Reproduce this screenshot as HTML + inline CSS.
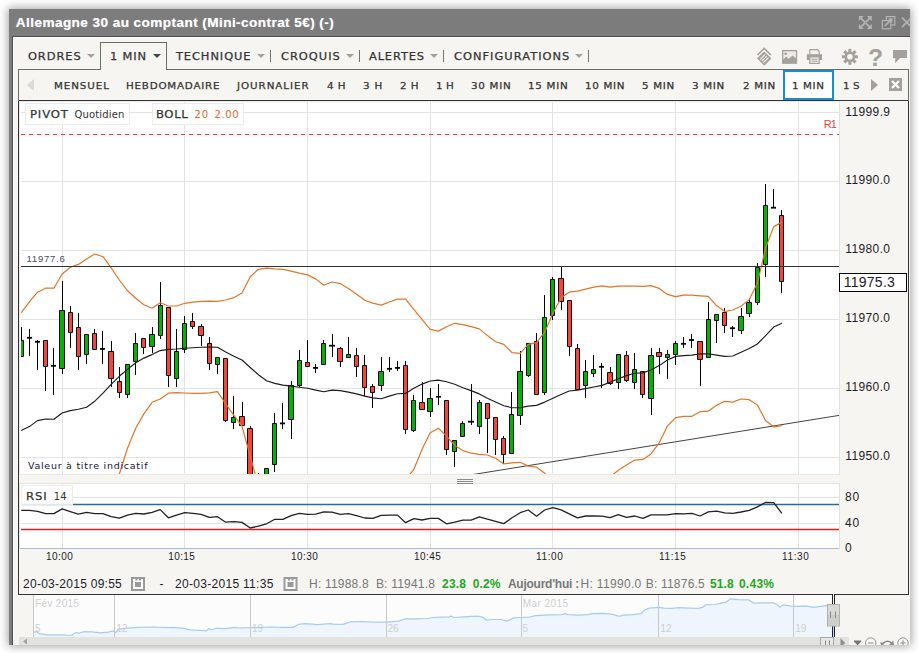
<!DOCTYPE html>
<html lang="fr"><head><meta charset="utf-8"><title>Allemagne 30 au comptant</title>
<style>
html,body{margin:0;padding:0;background:#fff;}
body{width:918px;height:653px;overflow:hidden;position:relative;font-family:"Liberation Sans",sans-serif;}
.abs{position:absolute;}
.t{position:absolute;white-space:nowrap;}
#win{position:absolute;left:9px;top:9px;width:901px;height:636px;background:#f6f5f1;box-shadow:0 0 9px 1px rgba(0,0,0,.38);}
</style></head>
<body>
<div id="win"></div>
<div class="abs" style="left:9px;top:9px;width:901px;height:27px;background:#7c7c7c;"></div>
<div class="abs" style="left:9px;top:9px;width:3px;height:636px;background:#7c7c7c;"></div>
<div class="abs" style="left:12px;top:36px;width:898px;height:1px;background:#4d4d4d;"></div>
<div class="abs" style="left:12px;top:36px;width:1px;height:609px;background:#4d4d4d;"></div>
<div class="abs" style="left:13px;top:37px;width:897px;height:1px;background:#fff;"></div>
<div class="abs" style="left:13px;top:37px;width:1px;height:608px;background:#fff;"></div>
<div class="t" style="left:15.8px;top:15.0px;font:bold 13.6px/15px 'Liberation Sans',sans-serif;color:#fff;letter-spacing:0.42px;text-shadow:0 0 1px rgba(255,255,255,.6);">Allemagne 30 au comptant (Mini-contrat 5€) (-)</div>
<svg class="abs" style="left:0;top:0" width="918" height="653" viewBox="0 0 918 653">
<defs><clipPath id="cm"><rect x="21" y="102" width="818" height="372"/></clipPath><clipPath id="cr"><rect x="20" y="483" width="819" height="65"/></clipPath></defs>
<rect x="19" y="101" width="820" height="374" fill="#e9e9e9"/>
<rect x="20" y="102" width="819" height="372" fill="#fff"/>
<rect x="19" y="483" width="820" height="66" fill="#e4e4e4"/>
<rect x="20" y="484" width="819" height="64" fill="#fff"/>
<path d="M62.5 102V474M62.5 484V548M184.5 102V474M184.5 484V548M307.5 102V474M307.5 484V548M430.5 102V474M430.5 484V548M552.5 102V474M552.5 484V548M675.5 102V474M675.5 484V548M798.5 102V474M798.5 484V548M21 112.5H839M21 181.5H839M21 250.5H839M21 319.5H839M21 388.5H839M21 457.5H839M21 497.5H839M21 523.5H839" stroke="#e3e3e3" stroke-width="1" fill="none"/>
<path d="M839.5 101V475M839.5 483V549" stroke="#e2e2e2" stroke-width="1"/>
<path d="M20 548.5H839" stroke="#a9bdd2" stroke-width="1"/>
<path d="M21 134.5H839" stroke="#f03a3a" stroke-width="1" stroke-dasharray="4 4"/>
<g clip-path="url(#cm)">
<path d="M470 475L839 415.4" stroke="#444" stroke-width="1" fill="none"/>
<path d="M21.5 327V356M29.5 329V356M37.5 340V370M45.5 340V391M53.5 348V395M62.5 281V374M70.5 306V348M78.5 313V370M86.5 334V364M94.5 329V350M102.5 331V364M111.5 341V387M119.5 367V398M127.5 365V398M135.5 333V375M143.5 338V354M152.5 327V353M160.5 282V339M168.5 307V387M176.5 329V387M184.5 316V353M192.5 313V329M201.5 324V346M209.5 337V370M217.5 357V374M225.5 358V422M233.5 396V429M242.5 402V425M250.5 426V480M258.5 473V480M266.5 468V480M274.5 413V472M282.5 403V429M291.5 381V439M299.5 350V387M307.5 340V366M315.5 364V373M323.5 340V364M332.5 334V357M340.5 347V367M348.5 337V357M356.5 348V377M364.5 355V396M372.5 384V408M381.5 357V391M389.5 357V372M397.5 361V371M405.5 361V434M413.5 395V432M422.5 382V409M430.5 388V417M438.5 384V405M446.5 401V455M454.5 441V467M462.5 421V437M471.5 384V425M479.5 400V434M487.5 403V453M495.5 418V455M503.5 436V464M511.5 392V453M520.5 351V425M528.5 343V377M536.5 333V394M544.5 295V395M552.5 277V320M561.5 267V310M569.5 300V356M577.5 344V389M585.5 360V398M593.5 355V377M601.5 363V388M610.5 367V385M618.5 354V389M626.5 351V382M634.5 353V389M642.5 372V398M651.5 348V415M659.5 348V374M667.5 350V379M675.5 341V365M683.5 337V348M691.5 334V348M700.5 342V386M708.5 302V357M716.5 314V343M724.5 308V333M732.5 326V337M741.5 308V334M749.5 298V317M757.5 263V305M765.5 184V277M773.5 189V208M781.5 210V293" stroke="#000" stroke-width="1" fill="none"/>
<path d="M18.5 340.5H23.5V356.5H18.5ZM59.5 310.5H64.5V368.5H59.5ZM84.5 334.5H88.5V354.5H84.5ZM125.5 364.5H129.5V394.5H125.5ZM133.5 343.5H137.5V361.5H133.5ZM149.5 334.5H154.5V346.5H149.5ZM158.5 305.5H162.5V335.5H158.5ZM174.5 351.5H178.5V378.5H174.5ZM182.5 323.5H186.5V349.5H182.5ZM215.5 357.5H219.5V364.5H215.5ZM231.5 417.5H235.5V422.5H231.5ZM264.5 468.5H268.5V480.5H264.5ZM272.5 423.5H276.5V464.5H272.5ZM288.5 385.5H293.5V419.5H288.5ZM297.5 360.5H301.5V385.5H297.5ZM321.5 343.5H325.5V364.5H321.5ZM346.5 354.5H350.5V357.5H346.5ZM378.5 371.5H383.5V385.5H378.5ZM411.5 400.5H415.5V430.5H411.5ZM427.5 398.5H432.5V411.5H427.5ZM452.5 440.5H456.5V451.5H452.5ZM460.5 423.5H464.5V436.5H460.5ZM477.5 402.5H481.5V426.5H477.5ZM509.5 414.5H513.5V453.5H509.5ZM517.5 371.5H522.5V415.5H517.5ZM526.5 343.5H530.5V375.5H526.5ZM542.5 317.5H546.5V392.5H542.5ZM550.5 279.5H554.5V315.5H550.5ZM583.5 371.5H587.5V385.5H583.5ZM591.5 369.5H595.5V373.5H591.5ZM616.5 354.5H620.5V382.5H616.5ZM632.5 369.5H636.5V382.5H632.5ZM648.5 355.5H653.5V398.5H648.5ZM665.5 354.5H669.5V357.5H665.5ZM673.5 343.5H677.5V354.5H673.5ZM706.5 319.5H710.5V357.5H706.5ZM714.5 314.5H718.5V320.5H714.5ZM738.5 316.5H743.5V330.5H738.5ZM746.5 302.5H751.5V313.5H746.5ZM755.5 267.5H759.5V302.5H755.5ZM763.5 205.5H767.5V264.5H763.5Z" stroke="#0a0a0a" stroke-width="1" fill="#00b400"/>
<path d="M43.5 340.5H47.5V366.5H43.5ZM68.5 312.5H72.5V332.5H68.5ZM76.5 327.5H80.5V356.5H76.5ZM92.5 333.5H96.5V349.5H92.5ZM108.5 351.5H113.5V378.5H108.5ZM117.5 381.5H121.5V392.5H117.5ZM141.5 338.5H145.5V347.5H141.5ZM166.5 307.5H170.5V375.5H166.5ZM190.5 321.5H194.5V326.5H190.5ZM198.5 326.5H203.5V335.5H198.5ZM207.5 343.5H211.5V363.5H207.5ZM223.5 358.5H227.5V420.5H223.5ZM239.5 416.5H244.5V425.5H239.5ZM247.5 428.5H252.5V480.5H247.5ZM256.5 476.5H260.5V480.5H256.5ZM305.5 362.5H309.5V366.5H305.5ZM337.5 348.5H342.5V361.5H337.5ZM354.5 355.5H358.5V366.5H354.5ZM362.5 365.5H366.5V387.5H362.5ZM370.5 386.5H374.5V392.5H370.5ZM403.5 365.5H407.5V429.5H403.5ZM419.5 402.5H424.5V409.5H419.5ZM444.5 400.5H448.5V449.5H444.5ZM485.5 403.5H489.5V418.5H485.5ZM493.5 417.5H497.5V439.5H493.5ZM501.5 438.5H505.5V454.5H501.5ZM534.5 341.5H538.5V394.5H534.5ZM558.5 278.5H563.5V301.5H558.5ZM567.5 300.5H571.5V346.5H567.5ZM575.5 348.5H579.5V389.5H575.5ZM607.5 372.5H612.5V383.5H607.5ZM624.5 355.5H628.5V380.5H624.5ZM640.5 371.5H644.5V394.5H640.5ZM656.5 352.5H661.5V356.5H656.5ZM697.5 341.5H702.5V359.5H697.5ZM722.5 312.5H726.5V325.5H722.5ZM779.5 215.5H783.5V281.5H779.5Z" stroke="#0a0a0a" stroke-width="1" fill="#f8423c"/>
<g fill="#000"><rect x="27" y="336.90" width="5" height="1.8"/><rect x="35" y="340.90" width="5" height="1.8"/><rect x="51" y="364.90" width="5" height="1.8"/><rect x="100" y="348.00" width="5" height="1.8"/><rect x="280" y="422.50" width="5" height="1.8"/><rect x="313" y="367.00" width="5" height="1.8"/><rect x="329" y="344.80" width="6" height="1.8"/><rect x="387" y="367.90" width="5" height="1.8"/><rect x="395" y="367.00" width="5" height="1.8"/><rect x="436" y="395.90" width="5" height="1.8"/><rect x="468" y="420.80" width="6" height="1.8"/><rect x="599" y="365.90" width="5" height="1.8"/><rect x="681" y="342.90" width="5" height="1.8"/><rect x="689" y="339.10" width="5" height="1.8"/><rect x="730" y="327.30" width="5" height="1.8"/><rect x="771" y="206.80" width="5" height="1.8"/></g>
<polyline points="21.2,312.7 29.4,301.8 37.5,292.2 45.7,288.2 53.9,288.2 62.1,274.0 70.3,267.3 78.4,264.4 86.6,258.9 94.8,254.0 103.0,256.7 111.2,267.8 119.3,280.0 127.5,290.7 135.7,298.2 143.9,304.7 152.1,308.2 160.2,302.7 168.4,306.0 176.6,306.0 184.8,303.3 193.0,302.2 201.1,301.3 209.3,301.1 217.5,301.3 225.7,300.0 233.9,297.6 242.0,292.9 250.2,276.7 258.4,269.3 266.6,268.2 274.8,268.9 282.9,269.3 291.1,271.1 299.3,273.1 307.5,274.9 315.7,278.9 323.8,285.3 332.0,282.0 340.2,283.6 348.4,288.4 356.6,294.2 364.7,300.2 372.9,303.1 381.1,305.1 389.3,302.0 397.5,299.1 405.6,299.1 413.8,309.3 422.0,319.4 430.2,329.3 438.4,331.1 446.5,326.7 454.7,323.3 462.9,324.7 471.1,326.7 479.3,328.9 487.4,335.6 495.6,341.8 503.8,344.4 512.0,352.7 520.2,353.3 528.3,344.4 536.5,342.7 544.7,332.2 552.9,313.3 561.1,297.8 569.2,292.2 577.4,291.1 585.6,289.1 593.8,287.1 602.0,285.8 610.1,287.1 618.3,286.1 626.5,286.2 634.7,286.2 642.9,286.4 651.0,285.6 659.2,288.4 667.4,294.4 675.6,296.7 683.8,295.1 691.9,295.1 700.1,295.8 708.3,296.4 716.5,305.6 724.7,311.6 732.8,310.0 741.0,306.2 749.2,299.6 757.4,283.3 765.6,248.0 773.7,226.6 781.9,222.1" fill="none" stroke="#e0762a" stroke-width="1.2" stroke-linejoin="round"/>
<polyline points="21.2,560.0 29.4,555.0 37.5,550.0 45.7,545.0 53.9,540.0 62.1,535.0 70.3,530.0 78.4,525.0 86.6,520.0 94.8,515.0 103.0,505.0 111.2,490.0 119.3,474.0 127.5,448.3 135.7,428.3 143.9,413.9 152.1,402.3 160.2,399.0 168.4,393.2 176.6,392.6 184.8,393.0 193.0,393.4 201.1,393.4 209.3,392.8 217.5,391.6 225.7,403.9 233.9,415.4 242.0,426.1 250.2,456.0 258.4,486.0 266.6,500.0 274.8,520.0 282.9,530.0 291.1,535.0 299.3,535.0 307.5,530.0 315.7,525.0 323.8,520.0 332.0,515.0 340.2,512.0 348.4,510.0 356.6,508.0 364.7,505.0 372.9,500.0 381.1,495.0 389.3,490.0 397.5,485.0 405.6,480.0 413.8,469.4 422.0,449.4 430.2,432.8 438.4,428.3 446.5,436.1 454.7,445.4 462.9,450.6 471.1,453.2 479.3,454.3 487.4,455.0 495.6,458.3 503.8,463.9 512.0,462.8 520.2,462.3 528.3,466.1 536.5,467.2 544.7,473.2 552.9,482.0 561.1,488.0 569.2,490.0 577.4,490.0 585.6,488.0 593.8,486.0 602.0,482.0 610.1,477.0 618.3,470.3 626.5,465.0 634.7,460.1 642.9,459.4 651.0,453.9 659.2,442.8 667.4,426.1 675.6,417.7 683.8,416.3 691.9,416.3 700.1,411.7 708.3,411.2 716.5,405.2 724.7,401.4 732.8,402.1 741.0,399.0 749.2,399.7 757.4,405.0 765.6,420.6 773.7,426.8 781.9,425.7" fill="none" stroke="#e0762a" stroke-width="1.2" stroke-linejoin="round"/>
<polyline points="21.2,430.6 29.4,426.6 37.5,420.6 45.7,419.0 53.9,419.2 62.1,413.0 70.3,410.6 78.4,409.2 86.6,407.2 94.8,401.2 103.0,393.2 111.2,384.3 119.3,376.3 127.5,369.4 135.7,362.8 143.9,358.1 152.1,354.6 160.2,350.6 168.4,349.4 176.6,349.0 184.8,348.3 193.0,347.7 201.1,347.2 209.3,347.0 217.5,347.2 225.7,351.9 233.9,356.2 242.0,360.0 250.2,367.5 258.4,374.7 266.6,380.7 274.8,383.4 282.9,385.1 291.1,386.1 299.3,387.2 307.5,388.3 315.7,390.1 323.8,391.7 332.0,390.1 340.2,390.6 348.4,392.1 356.6,393.9 364.7,396.1 372.9,397.9 381.1,398.8 389.3,396.1 397.5,393.7 405.6,393.4 413.8,388.3 422.0,384.1 430.2,381.0 438.4,380.1 446.5,381.7 454.7,384.3 462.9,387.7 471.1,390.6 479.3,393.9 487.4,398.3 495.6,402.1 503.8,405.7 512.0,407.7 520.2,407.7 528.3,406.1 536.5,405.4 544.7,402.1 552.9,398.3 561.1,394.6 569.2,391.0 577.4,390.1 585.6,388.6 593.8,387.0 602.0,385.4 610.1,382.3 618.3,378.8 626.5,375.6 634.7,373.3 642.9,372.9 651.0,370.0 659.2,365.6 667.4,360.0 675.6,356.4 683.8,355.6 691.9,355.1 700.1,353.8 708.3,353.8 716.5,355.1 724.7,356.4 732.8,356.0 741.0,352.2 749.2,348.4 757.4,344.0 765.6,335.6 773.7,327.1 781.9,323.3" fill="none" stroke="#1c1c1c" stroke-width="1.15" stroke-linejoin="round"/>
<path d="M21 266.5H839" stroke="#333" stroke-width="1"/>
</g>
<path d="M21 504.5H839" stroke="#1f6f96" stroke-width="1.4"/>
<path d="M21 529.5H839" stroke="#f01818" stroke-width="1.4"/>
<polyline clip-path="url(#cr)" points="21.2,510.4 29.4,510.4 37.5,511.3 45.7,513.6 53.9,513.6 62.1,508.9 70.3,511.6 78.4,514.2 86.6,512.4 94.8,513.6 103.0,513.6 111.2,516.7 119.3,518.2 127.5,515.1 135.7,513.3 143.9,514.0 152.1,512.4 160.2,509.6 168.4,517.8 176.6,515.1 184.8,512.7 193.0,513.3 201.1,514.4 209.3,517.3 217.5,516.7 225.7,522.2 233.9,521.6 242.0,522.4 250.2,528.0 258.4,526.2 266.6,523.8 274.8,519.3 282.9,519.3 291.1,515.6 299.3,513.3 307.5,514.4 315.7,514.2 323.8,511.8 332.0,512.2 340.2,514.4 348.4,513.6 356.6,515.6 364.7,518.0 372.9,518.4 381.1,515.3 389.3,515.1 397.5,515.1 405.6,522.7 413.8,518.7 422.0,520.0 430.2,518.4 438.4,518.4 446.5,523.8 454.7,522.2 462.9,520.2 471.1,520.2 479.3,516.9 487.4,519.1 495.6,521.3 503.8,523.6 512.0,517.8 520.2,512.7 528.3,510.0 536.5,516.2 544.7,510.0 552.9,507.6 561.1,509.8 569.2,513.8 577.4,517.8 585.6,516.0 593.8,515.8 602.0,516.2 610.1,517.6 618.3,514.7 626.5,517.3 634.7,516.0 642.9,518.4 651.0,514.9 659.2,514.9 667.4,514.9 675.6,513.6 683.8,513.8 691.9,513.3 700.1,516.0 708.3,511.8 716.5,511.1 724.7,512.9 732.8,513.3 741.0,512.0 749.2,510.4 757.4,506.9 765.6,502.4 773.7,502.7 781.9,513.3" fill="none" stroke="#222" stroke-width="1.3" stroke-linejoin="round"/>
<rect x="34" y="595" width="799" height="42" fill="#fcfcfc"/>
<polygon points="34,637 34,632.2 36.5,631.6 39.8,633.9 43.1,634.2 46.3,634.8 62.7,634.8 70.8,635.5 75.8,632.6 79.0,633.2 83.9,631.6 92.1,631.9 100.3,632.9 108.4,632.2 113.3,630.9 115.6,632.6 118.2,629.3 124.8,628.3 137.8,627.3 154.2,627.0 167.3,627.7 173.8,627.3 183.6,628.3 190.1,629.9 199.9,630.3 206.5,630.9 209.1,628.6 211.4,629.9 216.3,628.3 226.1,628.6 234.2,627.3 239.2,628.0 250.6,627.7 258.8,627.3 271.8,627.0 281.6,627.3 293.1,627.3 298.6,624.4 304.5,623.7 312.7,624.1 317.6,624.7 324.1,624.1 330.0,623.7 333.1,624.1 342.9,624.4 351.0,621.8 362.5,621.5 372.3,622.1 387.0,622.1 398.4,621.1 405.6,618.8 418.0,618.8 427.8,618.5 432.7,617.5 442.5,617.2 449.1,616.9 451.4,616.2 454.0,617.5 463.8,616.9 476.9,616.2 481.8,616.9 486.7,620.1 491.6,619.5 501.4,619.5 506.3,621.1 509.5,620.1 513.5,617.9 521.0,617.5 529.2,617.2 535.7,615.6 548.8,614.9 561.8,614.6 565.1,613.6 568.4,614.6 578.2,615.2 588.0,614.6 592.9,613.6 604.3,613.3 612.5,614.3 617.4,615.9 620.0,616.2 623.1,615.2 632.9,614.6 641.0,613.6 644.3,610.3 649.2,608.1 659.0,607.4 663.9,608.1 672.1,608.4 678.6,607.7 688.4,608.1 698.2,608.4 703.1,607.1 705.4,604.8 714.6,604.5 721.1,603.2 726.0,602.2 730.3,598.9 737.5,599.6 748.9,599.9 753.8,603.2 763.6,602.8 773.4,602.8 777.3,604.8 779.9,607.1 783.2,604.8 793.0,606.4 806.1,606.1 814.2,607.4 822.4,606.1 829.0,605.4 832,605.4 832,637" fill="#eef5fd"/>
<polyline points="34,632.2 36.5,631.6 39.8,633.9 43.1,634.2 46.3,634.8 62.7,634.8 70.8,635.5 75.8,632.6 79.0,633.2 83.9,631.6 92.1,631.9 100.3,632.9 108.4,632.2 113.3,630.9 115.6,632.6 118.2,629.3 124.8,628.3 137.8,627.3 154.2,627.0 167.3,627.7 173.8,627.3 183.6,628.3 190.1,629.9 199.9,630.3 206.5,630.9 209.1,628.6 211.4,629.9 216.3,628.3 226.1,628.6 234.2,627.3 239.2,628.0 250.6,627.7 258.8,627.3 271.8,627.0 281.6,627.3 293.1,627.3 298.6,624.4 304.5,623.7 312.7,624.1 317.6,624.7 324.1,624.1 330.0,623.7 333.1,624.1 342.9,624.4 351.0,621.8 362.5,621.5 372.3,622.1 387.0,622.1 398.4,621.1 405.6,618.8 418.0,618.8 427.8,618.5 432.7,617.5 442.5,617.2 449.1,616.9 451.4,616.2 454.0,617.5 463.8,616.9 476.9,616.2 481.8,616.9 486.7,620.1 491.6,619.5 501.4,619.5 506.3,621.1 509.5,620.1 513.5,617.9 521.0,617.5 529.2,617.2 535.7,615.6 548.8,614.9 561.8,614.6 565.1,613.6 568.4,614.6 578.2,615.2 588.0,614.6 592.9,613.6 604.3,613.3 612.5,614.3 617.4,615.9 620.0,616.2 623.1,615.2 632.9,614.6 641.0,613.6 644.3,610.3 649.2,608.1 659.0,607.4 663.9,608.1 672.1,608.4 678.6,607.7 688.4,608.1 698.2,608.4 703.1,607.1 705.4,604.8 714.6,604.5 721.1,603.2 726.0,602.2 730.3,598.9 737.5,599.6 748.9,599.9 753.8,603.2 763.6,602.8 773.4,602.8 777.3,604.8 779.9,607.1 783.2,604.8 793.0,606.4 806.1,606.1 814.2,607.4 822.4,606.1 829.0,605.4 832,605.4" fill="none" stroke="#a9cbee" stroke-width="1.2"/>
<path d="M33.5 595V637M114.5 595V637M250.5 595V637M386.5 595V637M521.5 595V637M658.5 595V637M793.5 595V637" stroke="#c8c8c8" stroke-width="1"/>
</svg>
<div class="abs" style="left:18px;top:100px;width:891px;height:1px;background:#333;"></div>
<div class="abs" style="left:18px;top:100px;width:1px;height:495px;background:#333;"></div>
<div class="abs" style="left:908px;top:100px;width:1px;height:495px;background:#333;"></div>
<div class="abs" style="left:18px;top:594px;width:815px;height:1px;background:#333;"></div>
<div class="abs" style="left:835px;top:594px;width:74px;height:1px;background:#333;"></div>
<div class="t" style="left:28.1px;top:50.0px;font:normal 10.4px/12px 'DejaVu Sans','Liberation Sans',sans-serif;color:#333;letter-spacing:0.84px;transform:scaleX(1.1);transform-origin:0.5px 0;-webkit-text-stroke:.25px #383838;">ORDRES</div>
<div class="abs" style="left:87px;top:54px;width:0;height:0;border-left:4.0px solid transparent;border-right:4.0px solid transparent;border-top:4px solid #a3a199"></div>
<div class="t" style="left:110.2px;top:50.0px;font:normal 10.4px/12px 'DejaVu Sans','Liberation Sans',sans-serif;color:#333;letter-spacing:0.75px;transform:scaleX(1.1);transform-origin:0.5px 0;-webkit-text-stroke:.25px #383838;">1 MIN</div>
<div class="abs" style="left:153px;top:54px;width:0;height:0;border-left:4.0px solid transparent;border-right:4.0px solid transparent;border-top:4px solid #444"></div>
<div class="t" style="left:176.2px;top:50.0px;font:normal 10.4px/12px 'DejaVu Sans','Liberation Sans',sans-serif;color:#333;letter-spacing:0.83px;transform:scaleX(1.1);transform-origin:0.5px 0;-webkit-text-stroke:.25px #383838;">TECHNIQUE</div>
<div class="abs" style="left:257px;top:54px;width:0;height:0;border-left:4.0px solid transparent;border-right:4.0px solid transparent;border-top:4px solid #a3a199"></div>
<div class="t" style="left:280.7px;top:50.0px;font:normal 10.4px/12px 'DejaVu Sans','Liberation Sans',sans-serif;color:#333;letter-spacing:0.91px;transform:scaleX(1.1);transform-origin:0.5px 0;-webkit-text-stroke:.25px #383838;">CROQUIS</div>
<div class="abs" style="left:346px;top:54px;width:0;height:0;border-left:4.0px solid transparent;border-right:4.0px solid transparent;border-top:4px solid #a3a199"></div>
<div class="t" style="left:369.2px;top:50.0px;font:normal 10.4px/12px 'DejaVu Sans','Liberation Sans',sans-serif;color:#333;letter-spacing:0.78px;transform:scaleX(1.1);transform-origin:0.5px 0;-webkit-text-stroke:.25px #383838;">ALERTES</div>
<div class="abs" style="left:430px;top:54px;width:0;height:0;border-left:4.0px solid transparent;border-right:4.0px solid transparent;border-top:4px solid #a3a199"></div>
<div class="t" style="left:453.5px;top:50.0px;font:normal 10.4px/12px 'DejaVu Sans','Liberation Sans',sans-serif;color:#333;letter-spacing:0.92px;transform:scaleX(1.1);transform-origin:0.5px 0;-webkit-text-stroke:.25px #383838;">CONFIGURATIONS</div>
<div class="abs" style="left:575px;top:54px;width:0;height:0;border-left:4.0px solid transparent;border-right:4.0px solid transparent;border-top:4px solid #a3a199"></div>
<div class="abs" style="left:270px;top:50px;width:1px;height:12px;background:#72756a;"></div>
<div class="abs" style="left:359px;top:50px;width:1px;height:12px;background:#72756a;"></div>
<div class="abs" style="left:443px;top:50px;width:1px;height:12px;background:#72756a;"></div>
<div class="abs" style="left:588px;top:50px;width:1px;height:12px;background:#72756a;"></div>
<div class="abs" style="left:18px;top:69px;width:83px;height:1px;background:#6c6f60;"></div>
<div class="abs" style="left:166px;top:69px;width:743px;height:1px;background:#6c6f60;"></div>
<div class="abs" style="left:100px;top:42px;width:67px;height:1px;background:#6c6f60;"></div>
<div class="abs" style="left:100px;top:42px;width:1px;height:28px;background:#6c6f60;"></div>
<div class="abs" style="left:166px;top:42px;width:1px;height:28px;background:#6c6f60;"></div>
<div class="abs" style="left:18px;top:69px;width:1px;height:32px;background:#6c6f60;"></div>
<div class="abs" style="left:908px;top:69px;width:1px;height:32px;background:#6c6f60;"></div>
<div class="abs" style="left:783px;top:70px;width:47px;height:26px;border:2px solid #1b8ccd;background:#fff"></div>
<div class="t" style="left:53.6px;top:80.0px;font:normal 9.4px/11px 'DejaVu Sans','Liberation Sans',sans-serif;color:#333;letter-spacing:0.83px;transform:scaleX(1.1);transform-origin:0.5px 0;-webkit-text-stroke:.25px #383838;">MENSUEL</div>
<div class="t" style="left:126.2px;top:80.0px;font:normal 9.4px/11px 'DejaVu Sans','Liberation Sans',sans-serif;color:#333;letter-spacing:0.72px;transform:scaleX(1.1);transform-origin:0.5px 0;-webkit-text-stroke:.25px #383838;">HEBDOMADAIRE</div>
<div class="t" style="left:237.3px;top:80.0px;font:normal 9.4px/11px 'DejaVu Sans','Liberation Sans',sans-serif;color:#333;letter-spacing:0.87px;transform:scaleX(1.1);transform-origin:0.5px 0;-webkit-text-stroke:.25px #383838;">JOURNALIER</div>
<div class="t" style="left:327.4px;top:80.0px;font:normal 9.4px/11px 'DejaVu Sans','Liberation Sans',sans-serif;color:#333;letter-spacing:0.41px;transform:scaleX(1.1);transform-origin:0.5px 0;-webkit-text-stroke:.25px #383838;">4 H</div>
<div class="t" style="left:363.3px;top:80.0px;font:normal 9.4px/11px 'DejaVu Sans','Liberation Sans',sans-serif;color:#333;letter-spacing:0.73px;transform:scaleX(1.1);transform-origin:0.5px 0;-webkit-text-stroke:.25px #383838;">3 H</div>
<div class="t" style="left:399.5px;top:80.0px;font:normal 9.4px/11px 'DejaVu Sans','Liberation Sans',sans-serif;color:#333;letter-spacing:0.41px;transform:scaleX(1.1);transform-origin:0.5px 0;-webkit-text-stroke:.25px #383838;">2 H</div>
<div class="t" style="left:436.1px;top:80.0px;font:normal 9.4px/11px 'DejaVu Sans','Liberation Sans',sans-serif;color:#333;letter-spacing:0.09px;transform:scaleX(1.1);transform-origin:0.5px 0;-webkit-text-stroke:.25px #383838;">1 H</div>
<div class="t" style="left:470.9px;top:80.0px;font:normal 9.4px/11px 'DejaVu Sans','Liberation Sans',sans-serif;color:#333;letter-spacing:0.68px;transform:scaleX(1.1);transform-origin:0.5px 0;-webkit-text-stroke:.25px #383838;">30 MIN</div>
<div class="t" style="left:528.4px;top:80.0px;font:normal 9.4px/11px 'DejaVu Sans','Liberation Sans',sans-serif;color:#333;letter-spacing:0.68px;transform:scaleX(1.1);transform-origin:0.5px 0;-webkit-text-stroke:.25px #383838;">15 MIN</div>
<div class="t" style="left:585.2px;top:80.0px;font:normal 9.4px/11px 'DejaVu Sans','Liberation Sans',sans-serif;color:#333;letter-spacing:0.63px;transform:scaleX(1.1);transform-origin:0.5px 0;-webkit-text-stroke:.25px #383838;">10 MIN</div>
<div class="t" style="left:642.1px;top:80.0px;font:normal 9.4px/11px 'DejaVu Sans','Liberation Sans',sans-serif;color:#333;letter-spacing:0.64px;transform:scaleX(1.1);transform-origin:0.5px 0;-webkit-text-stroke:.25px #383838;">5 MIN</div>
<div class="t" style="left:692.4px;top:80.0px;font:normal 9.4px/11px 'DejaVu Sans','Liberation Sans',sans-serif;color:#333;letter-spacing:0.64px;transform:scaleX(1.1);transform-origin:0.5px 0;-webkit-text-stroke:.25px #383838;">3 MIN</div>
<div class="t" style="left:742.7px;top:80.0px;font:normal 9.4px/11px 'DejaVu Sans','Liberation Sans',sans-serif;color:#333;letter-spacing:0.64px;transform:scaleX(1.1);transform-origin:0.5px 0;-webkit-text-stroke:.25px #383838;">2 MIN</div>
<div class="t" style="left:792.4px;top:80.0px;font:normal 9.4px/11px 'DejaVu Sans','Liberation Sans',sans-serif;color:#333;letter-spacing:0.57px;transform:scaleX(1.1);transform-origin:0.5px 0;-webkit-text-stroke:.25px #383838;">1 MIN</div>
<div class="t" style="left:843.4px;top:80.0px;font:normal 9.4px/11px 'DejaVu Sans','Liberation Sans',sans-serif;color:#333;letter-spacing:0.05px;transform:scaleX(1.1);transform-origin:0.5px 0;-webkit-text-stroke:.25px #383838;">1 S</div>
<div class="abs" style="left:27px;top:79px;width:0;height:0;border-top:6px solid transparent;border-bottom:6px solid transparent;border-right:7px solid #dbdad4"></div>
<div class="abs" style="left:871px;top:79px;width:0;height:0;border-top:6.5px solid transparent;border-bottom:6.5px solid transparent;border-left:7px solid #a3a199"></div>
<svg class="abs" style="left:889px;top:78px" width="13" height="13" viewBox="0 0 13 13"><rect width="13" height="13" fill="#a3a199"/><path d="M3 3L10 10M10 3L3 10" stroke="#fff" stroke-width="2.4"/></svg>
<div class="abs" style="left:25px;top:103px;width:105px;height:22px;background:rgba(255,255,255,.8);border:1px solid #ececec;box-sizing:border-box"></div>
<div class="abs" style="left:152px;top:103px;width:92px;height:22px;background:rgba(255,255,255,.8);border:1px solid #ececec;box-sizing:border-box"></div>
<div class="t" style="left:29.8px;top:108.0px;font:normal 10.6px/13px 'DejaVu Sans','Liberation Sans',sans-serif;color:#333;letter-spacing:0.79px;transform:scaleX(1.1);transform-origin:0.5px 0;-webkit-text-stroke:.25px #383838;">PIVOT</div>
<div class="t" style="left:74.4px;top:109.0px;font:normal 10px/11px 'DejaVu Sans','Liberation Sans',sans-serif;color:#333;letter-spacing:0.17px;">Quotidien</div>
<div class="t" style="left:155.5px;top:108.0px;font:normal 10.6px/13px 'DejaVu Sans','Liberation Sans',sans-serif;color:#333;letter-spacing:0.56px;transform:scaleX(1.1);transform-origin:0.5px 0;-webkit-text-stroke:.25px #383838;">BOLL</div>
<div class="t" style="left:194.6px;top:109.0px;font:normal 10px/11px 'DejaVu Sans','Liberation Sans',sans-serif;color:#dd6a2a;letter-spacing:0.77px;">20</div>
<div class="t" style="left:214.5px;top:109.0px;font:normal 10px/11px 'DejaVu Sans','Liberation Sans',sans-serif;color:#dd6a2a;letter-spacing:0.58px;">2.00</div>
<div class="t" style="left:26.5px;top:253.0px;font:normal 9.6px/11px 'Liberation Sans',sans-serif;color:#474d6b;letter-spacing:0.71px;">11977.6</div>
<div class="t" style="left:27.9px;top:460.0px;font:normal 9.5px/11px 'DejaVu Sans','Liberation Sans',sans-serif;color:#15153a;letter-spacing:0.74px;">Valeur à titre indicatif</div>
<div class="t" style="left:823.7px;top:118.0px;font:normal 11px/12px 'Liberation Sans',sans-serif;color:#e84040;letter-spacing:-0.76px;">R1</div>
<div class="abs" style="left:21px;top:485px;width:52px;height:21px;background:rgba(255,255,255,.85);border:1px solid #ececec;box-sizing:border-box"></div>
<div class="t" style="left:25.7px;top:490.0px;font:normal 10.6px/13px 'DejaVu Sans','Liberation Sans',sans-serif;color:#333;letter-spacing:0.8px;transform:scaleX(1.1);transform-origin:0.5px 0;-webkit-text-stroke:.25px #383838;">RSI</div>
<div class="t" style="left:53.7px;top:491.0px;font:normal 10px/11px 'DejaVu Sans','Liberation Sans',sans-serif;color:#333;letter-spacing:0.27px;">14</div>
<div class="t" style="left:845.3px;top:105.0px;font:normal 12px/14px 'Liberation Sans',sans-serif;color:#1c1c2a;letter-spacing:0.37px;">11999.9</div>
<div class="t" style="left:845.3px;top:173.0px;font:normal 12px/14px 'Liberation Sans',sans-serif;color:#1c1c2a;letter-spacing:0.37px;">11990.0</div>
<div class="t" style="left:845.3px;top:242.0px;font:normal 12px/14px 'Liberation Sans',sans-serif;color:#1c1c2a;letter-spacing:0.37px;">11980.0</div>
<div class="t" style="left:845.3px;top:311.0px;font:normal 12px/14px 'Liberation Sans',sans-serif;color:#1c1c2a;letter-spacing:0.37px;">11970.0</div>
<div class="t" style="left:845.3px;top:380.0px;font:normal 12px/14px 'Liberation Sans',sans-serif;color:#1c1c2a;letter-spacing:0.37px;">11960.0</div>
<div class="t" style="left:845.3px;top:449.0px;font:normal 12px/14px 'Liberation Sans',sans-serif;color:#1c1c2a;letter-spacing:0.37px;">11950.0</div>
<div class="abs" style="left:839px;top:273px;width:68px;height:19px;background:#fff;border:1px solid #000;box-sizing:border-box"></div>
<div class="t" style="left:843.7px;top:274.0px;font:normal 14px/16px 'Liberation Sans',sans-serif;color:#1c1c2a;letter-spacing:0.27px;">11975.3</div>
<div class="t" style="left:844.9px;top:490.0px;font:normal 12px/14px 'Liberation Sans',sans-serif;color:#1c1c2a;letter-spacing:0.94px;">80</div>
<div class="t" style="left:844.9px;top:516.0px;font:normal 12px/14px 'Liberation Sans',sans-serif;color:#1c1c2a;letter-spacing:0.94px;">40</div>
<div class="t" style="left:844.9px;top:541.0px;font:normal 12px/14px 'Liberation Sans',sans-serif;color:#1c1c2a;letter-spacing:0.61px;">0</div>
<div class="t" style="left:46.1px;top:551.0px;font:normal 10px/11px 'Liberation Sans',sans-serif;color:#1c1c2a;letter-spacing:0.42px;">10:00</div>
<div class="t" style="left:168.2px;top:551.0px;font:normal 10px/11px 'Liberation Sans',sans-serif;color:#1c1c2a;letter-spacing:0.42px;">10:15</div>
<div class="t" style="left:291.1px;top:551.0px;font:normal 10px/11px 'Liberation Sans',sans-serif;color:#1c1c2a;letter-spacing:0.42px;">10:30</div>
<div class="t" style="left:414.1px;top:551.0px;font:normal 10px/11px 'Liberation Sans',sans-serif;color:#1c1c2a;letter-spacing:0.42px;">10:45</div>
<div class="t" style="left:536.1px;top:551.0px;font:normal 10px/11px 'Liberation Sans',sans-serif;color:#1c1c2a;letter-spacing:0.6px;">11:00</div>
<div class="t" style="left:659.1px;top:551.0px;font:normal 10px/11px 'Liberation Sans',sans-serif;color:#1c1c2a;letter-spacing:0.6px;">11:15</div>
<div class="t" style="left:782.1px;top:551.0px;font:normal 10px/11px 'Liberation Sans',sans-serif;color:#1c1c2a;letter-spacing:0.6px;">11:30</div>
<div class="t" style="left:23.0px;top:577.0px;font:normal 12px/14px 'Liberation Sans',sans-serif;color:#1c1c2a;letter-spacing:0.27px;">20-03-2015 09:55</div>
<div class="t" style="left:159.5px;top:577.0px;font:normal 12px/14px 'Liberation Sans',sans-serif;color:#1c1c2a;letter-spacing:1.0px;">-</div>
<div class="t" style="left:175.0px;top:577.0px;font:normal 12px/14px 'Liberation Sans',sans-serif;color:#1c1c2a;letter-spacing:0.3px;">20-03-2015 11:35</div>
<div class="t" style="left:309.0px;top:577.0px;font:normal 12px/14px 'Liberation Sans',sans-serif;color:#777;letter-spacing:0.21px;">H: 11988.8</div>
<div class="t" style="left:375.9px;top:577.0px;font:normal 12px/14px 'Liberation Sans',sans-serif;color:#777;letter-spacing:0.21px;">B: 11941.8</div>
<div class="t" style="left:442.1px;top:577.0px;font:bold 12px/14px 'Liberation Sans',sans-serif;color:#1ea81e;letter-spacing:0.18px;">23.8</div>
<div class="t" style="left:472.8px;top:577.0px;font:bold 12px/14px 'Liberation Sans',sans-serif;color:#1ea81e;letter-spacing:0.11px;">0.2%</div>
<div class="t" style="left:507.9px;top:577.0px;font:bold 12px/14px 'Liberation Sans',sans-serif;color:#777;letter-spacing:-0.24px;">Aujourd'hui :</div>
<div class="t" style="left:580.5px;top:577.0px;font:normal 12px/14px 'Liberation Sans',sans-serif;color:#777;letter-spacing:0.33px;">H: 11990.0</div>
<div class="t" style="left:645.7px;top:577.0px;font:normal 12px/14px 'Liberation Sans',sans-serif;color:#777;letter-spacing:0.21px;">B: 11876.5</div>
<div class="t" style="left:709.9px;top:577.0px;font:bold 12px/14px 'Liberation Sans',sans-serif;color:#1ea81e;letter-spacing:0.18px;">51.8</div>
<div class="t" style="left:738.9px;top:577.0px;font:bold 12px/14px 'Liberation Sans',sans-serif;color:#1ea81e;letter-spacing:0.27px;">0.43%</div>
<div class="t" style="left:35.2px;top:598.0px;font:normal 10px/11px 'Liberation Sans',sans-serif;color:#cfcfcf;letter-spacing:0.29px;">Fév 2015</div>
<div class="t" style="left:522.7px;top:598.0px;font:normal 10px/11px 'Liberation Sans',sans-serif;color:#cfcfcf;letter-spacing:0.44px;">Mar 2015</div>
<div class="t" style="left:35.0px;top:623.0px;font:normal 10px/11px 'Liberation Sans',sans-serif;color:#cfcfcf;">5</div>
<div class="t" style="left:116.5px;top:623.0px;font:normal 10px/11px 'Liberation Sans',sans-serif;color:#cfcfcf;">12</div>
<div class="t" style="left:252.0px;top:623.0px;font:normal 10px/11px 'Liberation Sans',sans-serif;color:#cfcfcf;">19</div>
<div class="t" style="left:387.5px;top:623.0px;font:normal 10px/11px 'Liberation Sans',sans-serif;color:#cfcfcf;">26</div>
<div class="t" style="left:522.5px;top:623.0px;font:normal 10px/11px 'Liberation Sans',sans-serif;color:#cfcfcf;">5</div>
<div class="t" style="left:660.5px;top:623.0px;font:normal 10px/11px 'Liberation Sans',sans-serif;color:#cfcfcf;">12</div>
<div class="t" style="left:795.3px;top:623.0px;font:normal 10px/11px 'Liberation Sans',sans-serif;color:#cfcfcf;">19</div>
<svg class="abs" style="left:850px;top:9px" width="60" height="27" viewBox="850 9 60 27"><path d="M865.0999999999999 22.400000000000002L860.0999999999999 17.400000000000002" stroke="#b4b4b4" stroke-width="1.8"/><path d="M858.8 16.1L863.8 16.1L858.8 21.1Z" fill="#b4b4b4"/><path d="M865.5 22.400000000000002L870.5 17.400000000000002" stroke="#b4b4b4" stroke-width="1.8"/><path d="M871.8 16.1L866.8 16.1L871.8 21.1Z" fill="#b4b4b4"/><path d="M865.0999999999999 22.8L860.0999999999999 27.8" stroke="#b4b4b4" stroke-width="1.8"/><path d="M858.8 29.1L863.8 29.1L858.8 24.1Z" fill="#b4b4b4"/><path d="M865.5 22.8L870.5 27.8" stroke="#b4b4b4" stroke-width="1.8"/><path d="M871.8 29.1L866.8 29.1L871.8 24.1Z" fill="#b4b4b4"/><rect x="886.4" y="16.6" width="8.4" height="8.4" fill="none" stroke="#b4b4b4" stroke-width="1.2"/><rect x="882.4" y="20.6" width="8.4" height="8.2" fill="#7c7c7c" stroke="#b4b4b4" stroke-width="1.2"/><path d="M884.8 26L891.5 19.4" stroke="#b4b4b4" stroke-width="1.6"/><path d="M892.6 18.2L888 18.6L892.2 22.8Z" fill="#b4b4b4"/><path d="M902 17.6L911.5 27.1M902 27.1L911.5 17.6" stroke="#b4b4b4" stroke-width="1.7"/></svg>
<svg class="abs" style="left:750px;top:44px" width="160" height="24" viewBox="750 44 160 24"><path d="M757.0 54.4L764.2 47.199999999999996L771.4000000000001 54.4L764.2 61.6Z" fill="#a3a199"/><path d="M756.7 56.9L764.2 49.4L771.7 56.9L764.2 64.4Z" fill="#f6f5f1"/><path d="M757.0 58.6L764.2 51.4L771.4000000000001 58.6L764.2 65.8Z" fill="#a3a199"/><g transform="translate(764.2 58.6) rotate(-45)"><path d="M-3.6 -2.3H3.6M-3.6 0H3.6M-3.6 2.3H3.6" stroke="#f6f5f1" stroke-width="1.1"/></g><rect x="782.7" y="50.6" width="13.8" height="12.6" fill="#ecebe6" stroke="#a3a199" stroke-width="1.3"/><circle cx="785.7" cy="53.8" r="1.3" fill="#a3a199"/><path d="M783 63V59.8L786.2 56.6L788.6 58.8L792.6 55.4L796.2 58.6V63Z" fill="#a3a199"/><path d="M809.8 54.2V49.7H817.4L819.2 51.5V54.2" fill="#f2f1ec" stroke="#a3a199" stroke-width="1.2"/><rect x="806.8" y="54.2" width="15.2" height="5.8" fill="#a3a199"/><rect x="809.8" y="56.8" width="9.4" height="6.6" fill="#f2f1ec" stroke="#a3a199" stroke-width="1.2"/><path d="M811.4 59.2H817.6M811.4 61.2H817.6" stroke="#a3a199" stroke-width="1"/><g transform="translate(849.9 56.8)"><rect x="-1.5" y="-8" width="3" height="4" fill="#a3a199" transform="rotate(0)"/><rect x="-1.5" y="-8" width="3" height="4" fill="#a3a199" transform="rotate(45)"/><rect x="-1.5" y="-8" width="3" height="4" fill="#a3a199" transform="rotate(90)"/><rect x="-1.5" y="-8" width="3" height="4" fill="#a3a199" transform="rotate(135)"/><rect x="-1.5" y="-8" width="3" height="4" fill="#a3a199" transform="rotate(180)"/><rect x="-1.5" y="-8" width="3" height="4" fill="#a3a199" transform="rotate(225)"/><rect x="-1.5" y="-8" width="3" height="4" fill="#a3a199" transform="rotate(270)"/><rect x="-1.5" y="-8" width="3" height="4" fill="#a3a199" transform="rotate(315)"/><circle r="4.1" fill="none" stroke="#a3a199" stroke-width="2.6"/></g><path d="M893 50H907V58H900.2L895.2 63V58H893Z" fill="#a3a199"/></svg>
<div class="t" style="left:868px;top:44.6px;font:bold 24.7px/26px 'Liberation Sans',sans-serif;color:#a3a199">?</div>
<svg class="abs" style="left:125px;top:575px" width="180" height="18" viewBox="125 575 180 18"><rect x="131" y="577" width="14" height="14" fill="#9a9a9a"/><rect x="133" y="579" width="10" height="10" fill="#fff"/><rect x="135" y="582" width="6" height="5" fill="#9a9a9a"/><rect x="135.5" y="579" width="2" height="1.5" fill="#9a9a9a"/><rect x="139" y="579" width="2" height="1.5" fill="#9a9a9a"/><rect x="283.5" y="577" width="14" height="14" fill="#9a9a9a"/><rect x="285.5" y="579" width="10" height="10" fill="#fff"/><rect x="287.5" y="582" width="6" height="5" fill="#9a9a9a"/><rect x="288.0" y="579" width="2" height="1.5" fill="#9a9a9a"/><rect x="291.5" y="579" width="2" height="1.5" fill="#9a9a9a"/></svg>
<svg class="abs" style="left:455px;top:476px" width="20" height="8" viewBox="455 476 20 8"><path d="M457 479.5H473M457 481.5H473M457 483.5H473" stroke="#8c8c8c" stroke-width="1"/></svg>
<svg class="abs" style="left:13px;top:594px" width="897" height="51" viewBox="13 594 897 51"><path d="M832.5 594V637M834.5 594V637" stroke="#222" stroke-width="1"/><path d="M833.5 595V637" stroke="#fff" stroke-width="1"/><path d="M833.5 626V637" stroke="#bcd9f5" stroke-width="1"/><rect x="827.5" y="604.5" width="12" height="21.5" fill="#d7d9d4" stroke="#b0b1ac" stroke-width="1"/><rect x="828" y="615" width="11" height="10.5" fill="#cdcfca"/><path d="M830.5 611.5V618M835.5 611.5V618" stroke="#8a8a86" stroke-width="1"/><rect x="19" y="637" width="830" height="8" fill="#e2e2df"/><path d="M27 638.5V644.5L23 641.5Z" fill="#a3a199"/><rect x="820.5" y="637.5" width="13" height="9" fill="#e6e6e2" stroke="#a9aaa5"/><path d="M825.5 640.5V646M829.5 640.5V646" stroke="#888"/><path d="M840.5 638V648L845 643Z" fill="#8f8d85"/><path d="M854 640.6H861.2V641.6L857.6 645.4L854 641.6Z" fill="#77756d"/><circle cx="870.7" cy="643" r="5.2" fill="none" stroke="#98968e" stroke-width="1"/><path d="M868 643H873.4" stroke="#98968e" stroke-width="1.1"/><path d="M882.4 645.5A5.2 5.2 0 0 1 891.8 643.6" fill="none" stroke="#8f8d85" stroke-width="1.4"/><path d="M888.6 645.5H894.2L893.2 640.6Z" fill="#8f8d85"/><path d="M880 642.6H885L881.6 646Z" fill="#8f8d85"/><circle cx="903" cy="643" r="5.2" fill="none" stroke="#98968e" stroke-width="1"/><path d="M900.3 643H905.7M903 640.3V645" stroke="#98968e" stroke-width="1.1"/></svg>
</body></html>
